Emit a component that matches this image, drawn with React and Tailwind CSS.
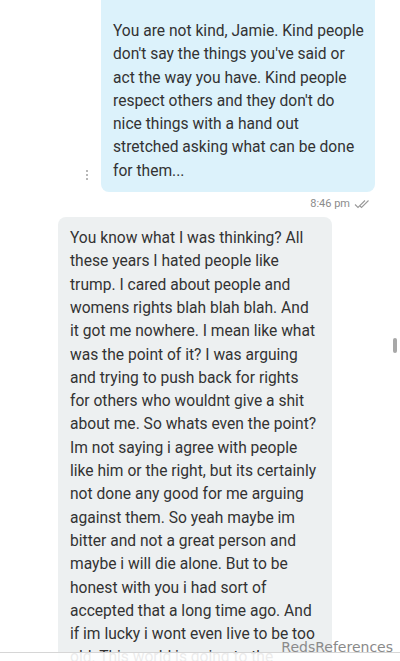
import React from "react";

const sent = [
  "You are not kind, Jamie. Kind people",
  "don't say the things you've said or",
  "act the way you have. Kind people",
  "respect others and they don't do",
  "nice things with a hand out",
  "stretched asking what can be done",
  "for them...",
];

const recv = [
  "You know what I was thinking? All",
  "these years I hated people like",
  "trump. I cared about people and",
  "womens rights blah blah blah. And",
  "it got me nowhere. I mean like what",
  "was the point of it? I was arguing",
  "and trying to push back for rights",
  "for others who wouldnt give a shit",
  "about me. So whats even the point?",
  "Im not saying i agree with people",
  "like him or the right, but its certainly",
  "not done any good for me arguing",
  "against them. So yeah maybe im",
  "bitter and not a great person and",
  "maybe i will die alone. But to be",
  "honest with you i had sort of",
  "accepted that a long time ago. And",
  "if im lucky i wont even live to be too",
  "old. This world is going to the",
];

export default function App() {
  return (
    <div
      className="relative w-[400px] h-[661px] overflow-hidden bg-white"
      style={{ fontFamily: "Roboto, 'Noto Sans', sans-serif" }}
    >
      <div className="flex flex-col">
        <div className="flex flex-row items-end justify-end pr-[25px]">
          <div className="flex flex-col items-center gap-[2px] mr-[13px] mb-[12px]">
            <span className="block w-[2px] h-[2px] rounded-full bg-[#a0a0a0]" />
            <span className="block w-[2px] h-[2px] rounded-full bg-[#a0a0a0]" />
            <span className="block w-[2px] h-[2px] rounded-full bg-[#a0a0a0]" />
          </div>
          <div className="w-[274px] bg-[#dcf2fb] rounded-b-[8px] pl-[12px] pr-[8px] pt-[20px] pb-[9px] text-[15.6px] leading-[23.3px] text-[#333333]">
            {sent.map((l, i) => (
              <div key={i} className="whitespace-nowrap">{l}</div>
            ))}
          </div>
        </div>
        <div className="flex flex-row items-center justify-end pr-[28px] mt-[4px] h-[16px] gap-[4px]">
          <span className="text-[11px] text-[#8c8c8c]">8:46 pm</span>
          <svg width="18" height="10" viewBox="0 0 18 10" fill="none" stroke="#9a9a9a" strokeWidth="1.1">
            <path d="M1 5.5 L4 8.5 L11 1.5" />
            <path d="M6 7 L7.5 8.5 L14.5 1.5" />
          </svg>
        </div>
        <div className="ml-[58px] mt-[5px] w-[274px] bg-[#edf0f1] rounded-t-[8px] pl-[12px] pr-[6px] pt-[10px] pb-[10px] text-[15.6px] leading-[23.3px] text-[#333333]">
          {recv.map((l, i) => (
            <div key={i} className="whitespace-nowrap">{l}</div>
          ))}
        </div>
      </div>

      <div className="absolute left-0 right-0 top-[652px] bottom-0 bg-white/90 border-t border-[#d6d6d6]" />

      <div className="absolute left-[393px] top-[338px] w-[4px] h-[15px] rounded-full bg-[#a8a8a8]" />

      <div
        className="absolute right-[7px] top-[637px] text-[14px] leading-[20px] text-[#8a8a8a]"
        style={{ fontFamily: "'DejaVu Sans', sans-serif" }}
      >
        RedsReferences
      </div>
    </div>
  );
}
